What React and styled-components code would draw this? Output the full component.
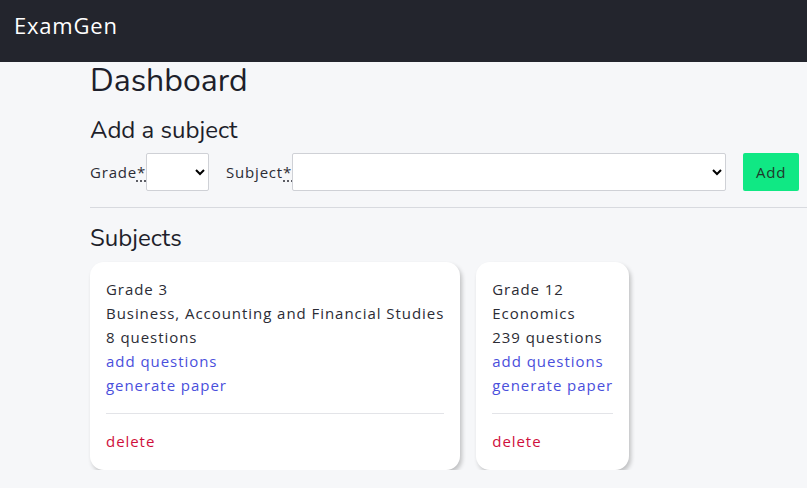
import React from "react";
import styled, { createGlobalStyle } from "styled-components";

const Global = createGlobalStyle`
  html, body { margin: 0; padding: 0; }
  body {
    background: #f6f7f9;
    font-family: "Open Sans", sans-serif;
    color: #1e1f2b;
    overflow: hidden;
  }
`;

const Navbar = styled.header`
  height: 62px;
  background: #23252d;
  display: flex;
  align-items: center;
  padding: 0 14px;
  box-sizing: border-box;
`;

const Brand = styled.div`
  color: #ffffff;
  font-family: "Open Sans", sans-serif;
  font-size: 22px;
  letter-spacing: 0.8px;
  padding-bottom: 12px;
`;

const Main = styled.main`
  padding-left: 90px;
`;

const Title = styled.h1`
  font-family: "Nunito", "Noto Sans", sans-serif;
  font-weight: 400;
  font-size: ${(p) => p.$size}px;
  line-height: 1.2;
  margin: ${(p) => p.$margin};
  color: #1e1f2b;
`;

const Form = styled.form`
  display: flex;
  align-items: center;
  height: 38px;
  margin-top: 8px;
`;

const Label = styled.label`
  font-family: "Open Sans", sans-serif;
  font-size: 15px;
  color: #2b2c35;
  margin-left: ${(p) => p.$ml || 0}px;
  letter-spacing: 0.8px;
`;

const Req = styled.abbr`
  text-decoration: underline dotted;
  text-underline-offset: 3px;
  cursor: help;
`;

const Select = styled.select`
  width: ${(p) => p.$w}px;
  height: 38px;
  border: 1px solid #cfd1d6;
  border-radius: 2px;
  background: #ffffff;
  font-size: 15px;
  box-sizing: border-box;
  padding: 0 6px;
`;

const AddButton = styled.button`
  margin-left: 17px;
  width: 56px;
  height: 38px;
  border: none;
  border-radius: 2px;
  background: #10e884;
  color: #1f3a2c;
  font-family: "Open Sans", sans-serif;
  font-size: 15px;
  letter-spacing: 0.8px;
`;

const Rule = styled.hr`
  border: none;
  border-top: 1px solid #d8dadf;
  margin: 16px 0 16px;
`;

const Cards = styled.div`
  display: flex;
  gap: 16px;
  margin-top: 9px;
  align-items: flex-start;
`;

const Card = styled.div`
  background: #ffffff;
  border-radius: 14px;
  padding: 15px 16px 16px;
  box-shadow: 2px 3px 4px rgba(0, 0, 0, 0.22);
  font-family: "Open Sans", sans-serif;
  font-size: 15px;
  line-height: 24px;
  letter-spacing: 0.95px;
  height: 208px;
  box-sizing: border-box;
`;

const Line = styled.div`
  color: #2b2c35;
  white-space: nowrap;
`;

const Link = styled.a`
  display: block;
  color: ${(p) => (p.$danger ? "#cf0f3c" : "#4a4fdc")};
  text-decoration: none;
  white-space: nowrap;
`;

const CardRule = styled.hr`
  border: none;
  border-top: 1px solid #e3e4e8;
  margin: 16px 0 15px;
`;

const subjects = [
  { grade: "Grade 3", name: "Business, Accounting and Financial Studies", count: 8 },
  { grade: "Grade 12", name: "Economics", count: 239 },
];

export default function App() {
  return (
    <>
      <Global />
      <Navbar>
        <Brand>ExamGen</Brand>
      </Navbar>
      <Main>
        <Title $size={32} $margin="0">Dashboard</Title>
        <Title $size={24} $margin="16px 0 0">Add a subject</Title>
        <Form>
          <Label>Grade<Req title="required">*</Req></Label>
          <Select $w={63}><option></option></Select>
          <Label $ml={17}>Subject<Req title="required">*</Req></Label>
          <Select $w={434}><option></option></Select>
          <AddButton type="button">Add</AddButton>
        </Form>
        <Rule />
        <Title $size={24} $margin="0">Subjects</Title>
        <Cards>
          {subjects.map((s) => (
            <Card key={s.name}>
              <Line>{s.grade}</Line>
              <Line>{s.name}</Line>
              <Line>{s.count} questions</Line>
              <Link href="#">add questions</Link>
              <Link href="#">generate paper</Link>
              <CardRule />
              <Link href="#" $danger>delete</Link>
            </Card>
          ))}
        </Cards>
      </Main>
    </>
  );
}
